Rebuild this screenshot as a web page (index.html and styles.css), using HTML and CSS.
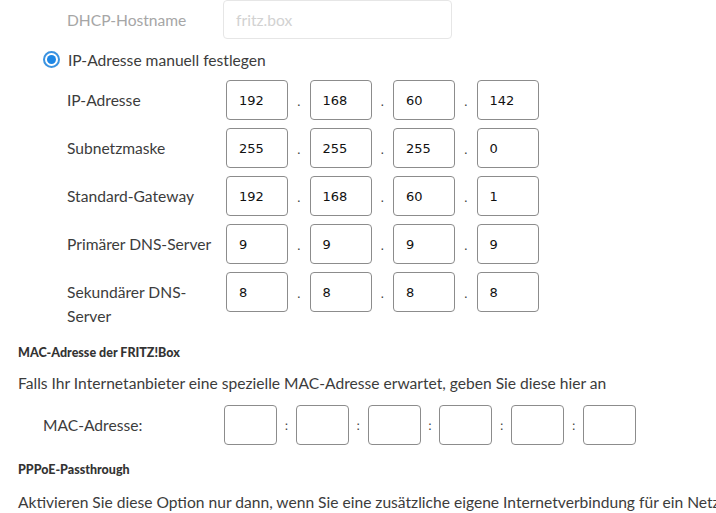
FILE: index.html
```html
<!DOCTYPE html>
<html lang="de">
<head>
<meta charset="utf-8">
<title>Zugangsdaten</title>
<link rel="stylesheet" href="styles.css">
</head>
<body>
<div class="page">
  <div class="row host-row">
    <span class="label muted">DHCP-Hostname</span>
    <div class="host-input">fritz.box</div>
  </div>
  <div class="radio-row">
    <span class="radio"><span class="radio-dot"></span></span>
    <span class="radio-label">IP-Adresse manuell festlegen</span>
  </div>
  <div class="ip-rows">
    <div class="ip-row">
      <span class="ip-label">IP-Adresse</span>
      <div class="octets">
        <div class="box">192</div><span class="sep">.</span>
        <div class="box">168</div><span class="sep">.</span>
        <div class="box">60</div><span class="sep">.</span>
        <div class="box">142</div>
      </div>
    </div>
    <div class="ip-row">
      <span class="ip-label">Subnetzmaske</span>
      <div class="octets">
        <div class="box">255</div><span class="sep">.</span>
        <div class="box">255</div><span class="sep">.</span>
        <div class="box">255</div><span class="sep">.</span>
        <div class="box">0</div>
      </div>
    </div>
    <div class="ip-row">
      <span class="ip-label">Standard-Gateway</span>
      <div class="octets">
        <div class="box">192</div><span class="sep">.</span>
        <div class="box">168</div><span class="sep">.</span>
        <div class="box">60</div><span class="sep">.</span>
        <div class="box">1</div>
      </div>
    </div>
    <div class="ip-row">
      <span class="ip-label">Primärer DNS-Server</span>
      <div class="octets">
        <div class="box">9</div><span class="sep">.</span>
        <div class="box">9</div><span class="sep">.</span>
        <div class="box">9</div><span class="sep">.</span>
        <div class="box">9</div>
      </div>
    </div>
    <div class="ip-row">
      <span class="ip-label">Sekundärer DNS-Server</span>
      <div class="octets">
        <div class="box">8</div><span class="sep">.</span>
        <div class="box">8</div><span class="sep">.</span>
        <div class="box">8</div><span class="sep">.</span>
        <div class="box">8</div>
      </div>
    </div>
  </div>

  <h3 class="section-title mac-title">MAC-Adresse der FRITZ!Box</h3>
  <p class="text">Falls Ihr Internetanbieter eine spezielle MAC-Adresse erwartet, geben Sie diese hier an</p>
  <div class="mac-row">
    <span class="mac-label">MAC-Adresse:</span>
    <div class="mac-boxes">
      <div class="mbox"></div><span class="colon">:</span>
      <div class="mbox"></div><span class="colon">:</span>
      <div class="mbox"></div><span class="colon">:</span>
      <div class="mbox"></div><span class="colon">:</span>
      <div class="mbox"></div><span class="colon">:</span>
      <div class="mbox"></div>
    </div>
  </div>

  <h3 class="section-title ppp-title">PPPoE-Passthrough</h3>
  <p class="text last">Aktivieren Sie diese Option nur dann, wenn Sie eine zusätzliche eigene Internetverbindung für ein Netzwerkgerät aufbauen möchten.</p>
</div>
</body>
</html>
```

FILE: styles.css
```css
html, body {
  margin: 0;
  padding: 0;
  background: #ffffff;
  overflow: hidden;
}
body {
  font-family: Lato, "Open Sans", sans-serif;
  font-size: 15.6px;
  color: #3c3c3c;
  width: 716px;
  height: 513px;
}
.page {
  padding-left: 18px;
}

.host-row {
  display: flex;
  align-items: center;
  height: 39px;
}
.host-row .label {
  width: 156px;
  margin-left: 49px;
}
.muted { color: #a6a6a6; }
.host-input {
  box-sizing: border-box;
  width: 229px;
  height: 39px;
  border: 1px solid #e6e6e6;
  border-radius: 4px;
  padding-left: 12px;
  display: flex;
  align-items: center;
  color: #d2d2d2;
}

.radio-row {
  display: flex;
  align-items: center;
  height: 41px;
  padding-left: 25px;
}
.radio {
  box-sizing: border-box;
  width: 17px;
  height: 17px;
  border: 2px solid #3b93e0;
  border-radius: 50%;
  display: flex;
  align-items: center;
  justify-content: center;
  margin-right: 8px;
}
.radio-dot {
  width: 9px;
  height: 9px;
  border-radius: 50%;
  background: #1e87e5;
}

.ip-rows {
  display: flex;
  flex-direction: column;
  gap: 8px;
}
.ip-row {
  display: flex;
  align-items: flex-start;
  padding-left: 49px;
}
.ip-label {
  width: 150px;
  margin-right: 9px;
  padding-top: 8px;
  line-height: 24px;
}
.octets, .mac-boxes {
  display: flex;
  align-items: center;
}
.box {
  box-sizing: border-box;
  width: 62px;
  height: 40px;
  border: 1px solid #8c8c8c;
  border-radius: 4px;
  padding-left: 12px;
  display: flex;
  align-items: center;
  font-family: "DejaVu Sans", Verdana, sans-serif;
  font-size: 13px;
  color: #111;
}
.sep {
  width: 21.5px;
  padding-top: 2px;
  text-align: center;
  font-family: "DejaVu Sans", sans-serif;
  font-size: 13px;
  color: #444;
}

.section-title {
  margin: 0;
  font-size: 12.5px;
  font-weight: 900;
  color: #333;
  line-height: 16px;
}
.mac-title { margin-top: 17px; }
.text {
  margin: 12px 0 0;
  line-height: 20px;
  white-space: nowrap;
}
.text.last { margin-top: 14px; }
.mac-row {
  display: flex;
  align-items: center;
  margin-top: 12px;
  padding-left: 25px;
}
.mac-label {
  width: 181px;
}
.mbox {
  box-sizing: border-box;
  width: 53px;
  height: 40px;
  border: 1px solid #8c8c8c;
  border-radius: 4px;
}
.colon {
  width: 18.8px;
  text-align: center;
  font-family: "DejaVu Sans", sans-serif;
  font-size: 13px;
  color: #444;
}
.ppp-title { margin-top: 17px; }
```
